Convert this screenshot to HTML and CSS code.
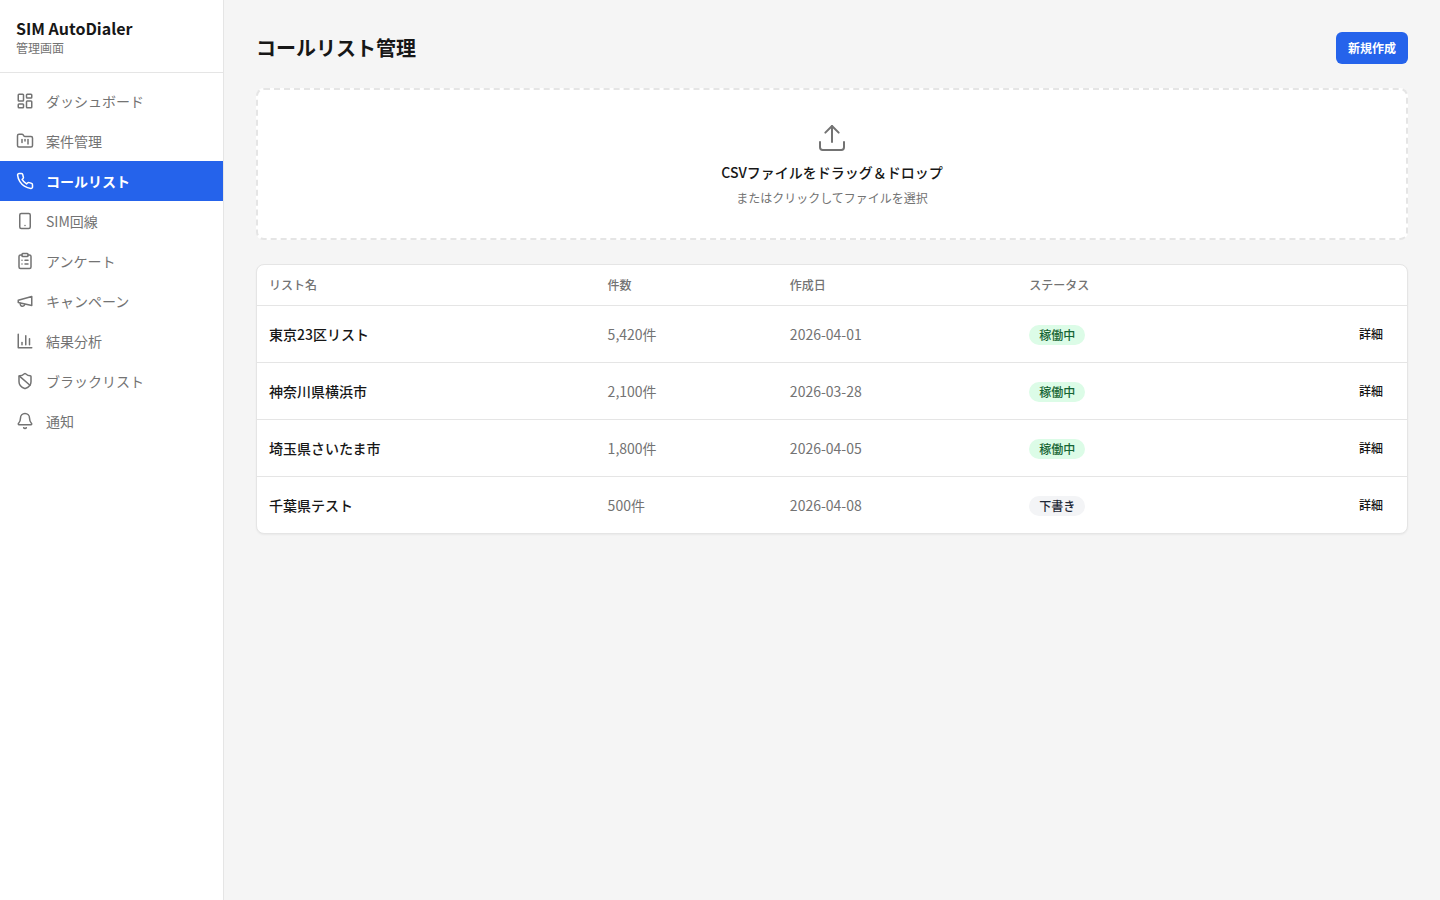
FILE: index.html
```html
<!DOCTYPE html>
<html lang="ja">
<head>
<meta charset="utf-8">
<meta name="viewport" content="width=device-width, initial-scale=1">
<title>コールリスト管理 | SIM AutoDialer</title>
<link rel="stylesheet" href="styles.css">
</head>
<body>
<div class="app">
  <aside class="sidebar">
    <div class="brand">
      <div class="brand-name">SIM AutoDialer</div>
      <div class="brand-sub">管理画面</div>
    </div>
    <nav class="nav">
      <a class="nav-link" href="#"><svg class="icon" viewBox="0 0 24 24"><rect width="7" height="9" x="3" y="3" rx="1"/><rect width="7" height="5" x="14" y="3" rx="1"/><rect width="7" height="9" x="14" y="12" rx="1"/><rect width="7" height="5" x="3" y="16" rx="1"/></svg>ダッシュボード</a>
      <a class="nav-link" href="#"><svg class="icon" viewBox="0 0 24 24"><path d="M4 20h16a2 2 0 0 0 2-2V8a2 2 0 0 0-2-2h-7.93a2 2 0 0 1-1.66-.9l-.82-1.2A2 2 0 0 0 7.93 3H4a2 2 0 0 0-2 2v13c0 1.1.9 2 2 2Z"/><path d="M8 10v4"/><path d="M12 10v2"/><path d="M16 10v6"/></svg>案件管理</a>
      <a class="nav-link active" href="#" aria-current="page"><svg class="icon" viewBox="0 0 24 24"><path d="M22 16.92v3a2 2 0 0 1-2.18 2 19.79 19.79 0 0 1-8.63-3.07 19.5 19.5 0 0 1-6-6 19.79 19.79 0 0 1-3.07-8.67A2 2 0 0 1 4.11 2h3a2 2 0 0 1 2 1.72 12.84 12.84 0 0 0 .7 2.81 2 2 0 0 1-.45 2.11L8.09 9.91a16 16 0 0 0 6 6l1.27-1.27a2 2 0 0 1 2.11-.45 12.84 12.84 0 0 0 2.81.7A2 2 0 0 1 22 16.92z"/></svg>コールリスト</a>
      <a class="nav-link" href="#"><svg class="icon" viewBox="0 0 24 24"><rect width="14" height="20" x="5" y="2" rx="2"/><path d="M12 18h.01"/></svg>SIM回線</a>
      <a class="nav-link" href="#"><svg class="icon" viewBox="0 0 24 24"><rect width="8" height="4" x="8" y="2" rx="1"/><path d="M16 4h2a2 2 0 0 1 2 2v14a2 2 0 0 1-2 2H6a2 2 0 0 1-2-2V6a2 2 0 0 1 2-2h2"/><path d="M12 11h4"/><path d="M12 16h4"/><path d="M8 11h.01"/><path d="M8 16h.01"/></svg>アンケート</a>
      <a class="nav-link" href="#"><svg class="icon" viewBox="0 0 24 24"><path d="m3 11 18-5v12L3 14v-3z"/><path d="M11.6 16.8a3 3 0 1 1-5.8-1.6"/></svg>キャンペーン</a>
      <a class="nav-link" href="#"><svg class="icon" viewBox="0 0 24 24"><path d="M3 3v18h18"/><path d="M18 17V9"/><path d="M13 17V5"/><path d="M8 17v-3"/></svg>結果分析</a>
      <a class="nav-link" href="#"><svg class="icon" viewBox="0 0 24 24"><path d="M20 13c0 5-3.5 7.5-7.66 8.95a1 1 0 0 1-.67-.01C7.5 20.5 4 18 4 13V6a1 1 0 0 1 1-1c2 0 4.5-1.2 6.24-2.72a1.17 1.17 0 0 1 1.52 0C14.51 3.81 17 5 19 5a1 1 0 0 1 1 1z"/><path d="m4.243 5.21 14.39 12.472"/></svg>ブラックリスト</a>
      <a class="nav-link" href="#"><svg class="icon" viewBox="0 0 24 24"><path d="M10.268 21a2 2 0 0 0 3.464 0"/><path d="M3.262 15.326A1 1 0 0 0 4 17h16a1 1 0 0 0 .74-1.673C19.41 13.956 18 12.499 18 8A6 6 0 0 0 6 8c0 4.499-1.411 5.956-2.738 7.326"/></svg>通知</a>
    </nav>
  </aside>
  <main class="main">
    <header class="page-header">
      <h1 class="page-title">コールリスト管理</h1>
      <button class="btn-primary" type="button">新規作成</button>
    </header>
    <button class="dropzone" type="button">
      <svg class="icon icon-upload" viewBox="0 0 24 24"><path d="M12 3v12"/><path d="m17 8-5-5-5 5"/><path d="M21 15v4a2 2 0 0 1-2 2H5a2 2 0 0 1-2-2v-4"/></svg>
      <span class="dropzone-title">CSVファイルをドラッグ＆ドロップ</span>
      <span class="dropzone-hint">またはクリックしてファイルを選択</span>
    </button>
    <section class="card">
      <table class="table">
        <thead>
          <tr><th scope="col">リスト名</th><th scope="col">件数</th><th scope="col">作成日</th><th scope="col">ステータス</th><th scope="col"></th></tr>
        </thead>
        <tbody>
          <tr><td class="name">東京23区リスト</td><td>5,420件</td><td>2026-04-01</td><td><span class="badge badge-active">稼働中</span></td><td class="actions"><button class="btn-ghost" type="button">詳細</button></td></tr>
          <tr><td class="name">神奈川県横浜市</td><td>2,100件</td><td>2026-03-28</td><td><span class="badge badge-active">稼働中</span></td><td class="actions"><button class="btn-ghost" type="button">詳細</button></td></tr>
          <tr><td class="name">埼玉県さいたま市</td><td>1,800件</td><td>2026-04-05</td><td><span class="badge badge-active">稼働中</span></td><td class="actions"><button class="btn-ghost" type="button">詳細</button></td></tr>
          <tr><td class="name">千葉県テスト</td><td>500件</td><td>2026-04-08</td><td><span class="badge badge-draft">下書き</span></td><td class="actions"><button class="btn-ghost" type="button">詳細</button></td></tr>
        </tbody>
      </table>
    </section>
  </main>
</div>
</body>
</html>
```
FILE: styles.css
```css
*,
*::before,
*::after {
  box-sizing: border-box;
}

body {
  margin: 0;
  background: #f5f5f5;
  color: #171717;
  font-family: "Noto Sans CJK JP", sans-serif;
  font-size: 14px;
  line-height: 20px;
}

button {
  border: 0;
  background: none;
  color: inherit;
  font: inherit;
  cursor: pointer;
}

.app {
  display: flex;
  min-height: 100vh;
}

.sidebar {
  flex: none;
  width: 224px;
  border-right: 1px solid #e5e5e5;
  background: #fff;
}

.brand {
  padding: 16px;
  border-bottom: 1px solid #e5e5e5;
}

.brand-name {
  font-size: 16px;
  font-weight: 700;
  line-height: 24px;
}

.brand-sub {
  color: #737373;
  font-size: 12px;
  line-height: 16px;
}

.nav {
  display: flex;
  flex-direction: column;
  padding: 8px 0;
}

.nav-link {
  display: flex;
  align-items: center;
  gap: 12px;
  padding: 10px 16px;
  color: #737373;
  text-decoration: none;
}

.nav-link.active {
  background: #2563eb;
  color: #fff;
  font-weight: 700;
}

.icon {
  flex: none;
  width: 18px;
  height: 18px;
  fill: none;
  stroke: currentColor;
  stroke-width: 2;
  stroke-linecap: round;
  stroke-linejoin: round;
}

.main {
  flex: 1;
  min-width: 0;
  padding: 32px;
}

.page-header {
  display: flex;
  align-items: center;
  justify-content: space-between;
  margin-bottom: 24px;
}

.page-title {
  margin: 0;
  font-size: 20px;
  font-weight: 700;
  line-height: 28px;
}

.btn-primary {
  height: 32px;
  padding: 0 12px;
  border-radius: 6px;
  background: #2563eb;
  color: #fff;
  font-size: 12px;
  font-weight: 700;
}

.dropzone {
  display: flex;
  flex-direction: column;
  align-items: center;
  gap: 8px;
  width: 100%;
  margin-bottom: 24px;
  padding: 32px;
  border: 2px dashed #e5e5e5;
  border-radius: 8px;
  background: #fff;
}

.icon-upload {
  width: 32px;
  height: 32px;
  color: #737373;
  stroke-width: 1.5;
}

.dropzone-title {
  font-weight: 500;
}

.dropzone-hint {
  color: #737373;
  font-size: 12px;
  line-height: 16px;
}

.card {
  overflow: hidden;
  border: 1px solid #e5e5e5;
  border-radius: 8px;
  background: #fff;
  box-shadow: 0 1px 2px rgba(0, 0, 0, 0.05);
}

.table {
  width: 100%;
  border-collapse: collapse;
}

.table th {
  height: 40px;
  padding: 0 12px;
  color: #737373;
  font-size: 12px;
  font-weight: 500;
  text-align: left;
}

.table td {
  padding: 12px;
  color: #737373;
}

.table tr {
  border-bottom: 1px solid #e5e5e5;
}

.table tbody tr:last-child {
  border-bottom: 0;
}

.table .name {
  color: #171717;
  font-weight: 500;
}

.table .actions {
  text-align: right;
}

.badge {
  display: inline-flex;
  padding: 2px 10px;
  border-radius: 10px;
  font-size: 12px;
  font-weight: 500;
  line-height: 16px;
  vertical-align: middle;
}

.badge-active {
  background: #dcfce7;
  color: #166534;
}

.badge-draft {
  background: #f3f4f6;
  color: #1f2937;
}

.btn-ghost {
  height: 32px;
  padding: 0 12px;
  border-radius: 6px;
  color: #171717;
  font-size: 12px;
  font-weight: 500;
}
```
